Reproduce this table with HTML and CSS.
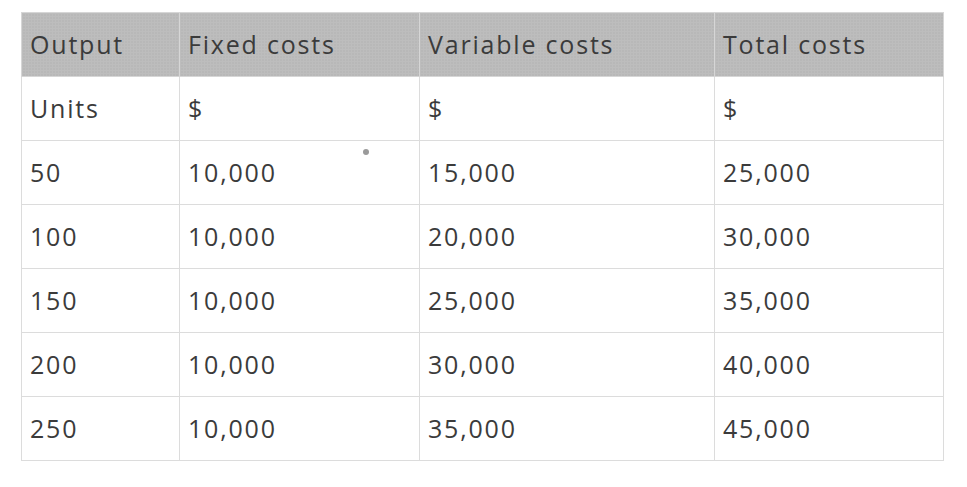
FILE: index.html
```html
<!DOCTYPE html>
<html>
<head>
<meta charset="utf-8">
<link rel="stylesheet" href="styles.css">
</head>
<body>
<div class="wrap">
<table class="costs">
<colgroup><col class="c1"><col class="c2"><col class="c3"><col class="c4"></colgroup>
<thead>
<tr><th>Output</th><th>Fixed costs</th><th>Variable costs</th><th>Total costs</th></tr>
</thead>
<tbody>
<tr><td>Units</td><td>$</td><td>$</td><td>$</td></tr>
<tr><td>50</td><td>10,000</td><td>15,000</td><td>25,000</td></tr>
<tr><td>100</td><td>10,000</td><td>20,000</td><td>30,000</td></tr>
<tr><td>150</td><td>10,000</td><td>25,000</td><td>35,000</td></tr>
<tr><td>200</td><td>10,000</td><td>30,000</td><td>40,000</td></tr>
<tr><td>250</td><td>10,000</td><td>35,000</td><td>45,000</td></tr>
</tbody>
</table>
<span class="dot"></span>
</div>
</body>
</html>
```
FILE: styles.css
```css
html, body { margin: 0; padding: 0; background: #fff; }
.wrap { position: relative; padding: 12px 0 0 21px; }
.costs {
  border-collapse: collapse;
  table-layout: fixed;
  width: 922px;
  font-family: "Open Sans", "Lato", sans-serif;
  font-size: 25px;
  letter-spacing: 1.8px;
  color: #3b3b3b;
}
.c1 { width: 158px; }
.c2 { width: 240px; }
.c3 { width: 295px; }
.c4 { width: 229px; }
.costs th, .costs td {
  border: 1px solid #dcdcdc;
  height: 64px;
  padding: 0 0 2px 8px;
  text-align: left;
  font-weight: 400;
  vertical-align: middle;
  box-sizing: border-box;
}
.costs th {
  background-color: #bdbdbd;
  background-image: radial-gradient(#aaaaaa 0.6px, transparent 0.7px);
  background-size: 3px 3px;
  border-color: #d6d6d6;
}
.dot {
  position: absolute;
  left: 363px;
  top: 149px;
  width: 6px;
  height: 6px;
  border-radius: 50%;
  background: #9a9a9a;
}
```
